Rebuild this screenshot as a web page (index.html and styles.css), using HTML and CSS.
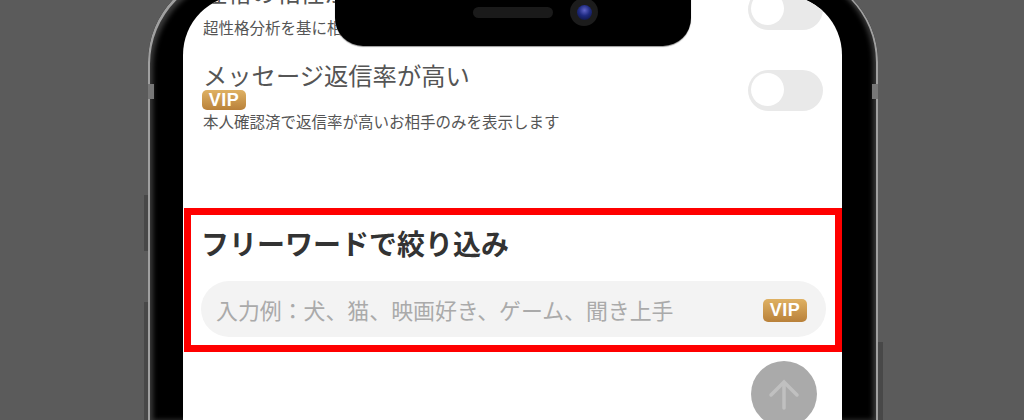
FILE: index.html
```html
<!DOCTYPE html>
<html lang="ja">
<head>
<meta charset="utf-8">
<title>フリーワードで絞り込み</title>
<link rel="stylesheet" href="styles.css">
</head>
<body>
<div class="side-btn btn-l1"></div>
<div class="side-btn btn-l2"></div>
<div class="side-btn btn-r1"></div>
<div class="phone">
  <div class="band band-l"></div>
  <div class="band band-r"></div>
  <div class="screen">
    <section class="row row-first">
      <div class="row-text">
        <div class="row-title">性格の相性が高い</div>
        <div class="row-sub">超性格分析を基に相性が高いお相手のみを表示します</div>
      </div>
      <div class="toggle toggle-first"><span class="knob"></span></div>
    </section>
    <section class="row row-second">
      <div class="row-text">
        <div class="row-title">メッセージ返信率が高い</div>
        <span class="vip vip-small">VIP</span>
        <div class="row-sub">本人確認済で返信率が高いお相手のみを表示します</div>
      </div>
      <div class="toggle"><span class="knob"></span></div>
    </section>
    <section class="freeword">
      <h2 class="freeword-title">フリーワードで絞り込み</h2>
      <div class="search">
        <span class="placeholder">入力例：犬、猫、映画好き、ゲーム、聞き上手</span>
        <span class="vip vip-large">VIP</span>
      </div>
    </section>
    <button class="to-top" type="button" aria-label="上へ">
      <svg width="34" height="34" viewBox="0 0 34 34" fill="none" stroke="#c0c0c0" stroke-width="3.5" stroke-linecap="round">
        <path d="M17 31V5M4 18L17 5L30 18"/>
      </svg>
    </button>
  </div>
  <div class="notch">
    <span class="speaker"></span>
    <span class="camera"><span class="lens"></span></span>
  </div>
</div>
</body>
</html>
```
FILE: styles.css
```css
* { box-sizing: border-box; }
html, body { margin: 0; height: 100%; }
body {
  position: relative;
  width: 1024px;
  height: 420px;
  overflow: hidden;
  background: #5b5b5b;
  font-family: "Noto Sans CJK JP", "Noto Sans", sans-serif;
}
.side-btn { position: absolute; background: #484848; }
.btn-l1 { left: 144px; top: 195px; width: 5px; height: 56px; }
.btn-l2 { left: 144px; top: 302px; width: 5px; height: 118px; }
.btn-r1 { left: 878px; top: 342px; width: 5px; height: 78px; }
.phone {
  position: absolute;
  left: 148px;
  top: -28px;
  width: 730px;
  height: 448px;
  background: #000;
  border-radius: 90px 90px 0 0;
  box-shadow: inset 2px 2px 0 0 #a0a0a0, inset -2px 0 0 0 #a0a0a0, inset 5px 5px 5px 0 #3a3a3a, inset -5px 0 5px 0 #3a3a3a;
}
.band { position: absolute; top: 112px; width: 6px; height: 15px; background: #777; }
.band-l { left: 0; }
.band-r { right: 0; }
.screen {
  position: absolute;
  left: 35px;
  top: 23px;
  width: 659px;
  height: 425px;
  background: #fff;
  border-radius: 60px 60px 0 0;
  overflow: hidden;
}
.row {
  display: flex;
  justify-content: space-between;
  align-items: flex-start;
  padding: 0 19px 0 20px;
}
.row-first { height: 60px; margin-top: -16px; }
.row-second { margin-top: 19px; height: 78px; }
.row-title { font-size: 24.3px; line-height: 30px; margin-top: 2px; color: #555; white-space: nowrap; }
.row-first .row-title { line-height: 26px; margin-top: 0; }
.row-sub { font-size: 15.5px; line-height: 20px; color: #555; white-space: nowrap; margin-top: 1px; }
.row-first .row-sub { line-height: 18px; margin-top: 13px; }
.toggle {
  flex: none;
  width: 75px;
  height: 41px;
  margin-top: 12px;
  padding: 3px;
  border-radius: 21px;
  background: #e9e9e9;
}
.row-first .toggle-first { margin-top: 10px; }
.knob { display: block; width: 33px; height: 33px; border-radius: 50%; background: #fff; }
.vip {
  display: inline-flex;
  align-items: center;
  justify-content: center;
  font-family: "Liberation Sans", sans-serif;
  font-weight: 700;
  color: #fff;
  letter-spacing: 0.5px;
  background: linear-gradient(180deg, #dfb163 0%, #b9813a 100%);
  border-radius: 5px;
}
.vip-small { display: flex; width: 44px; height: 20px; font-size: 18px; line-height: 20px; margin: 0 0 0 -1px; }
.freeword {
  margin-top: 72px;
  margin-left: 1px;
  height: 144px;
  width: 658px;
  border: 7px solid #f00;
  padding: 0 9px 0 10px;
}
.freeword-title {
  margin: 0;
  padding-top: 8px;
  font-size: 28px;
  line-height: 40px;
  font-weight: 700;
  color: #333;
  white-space: nowrap;
}
.search {
  display: flex;
  align-items: center;
  justify-content: space-between;
  height: 56px;
  margin-top: 18px;
  padding: 0 19px 0 15px;
  border-radius: 28px;
  background: #f3f3f3;
}
.placeholder { font-size: 21.9px; color: #aaa; white-space: nowrap; }
.vip-large { width: 44px; height: 23px; font-size: 18px; margin-top: 3px; }
.to-top {
  position: absolute;
  left: 568px;
  top: 366px;
  width: 66px;
  height: 66px;
  padding: 0;
  border: 0;
  border-radius: 50%;
  background: #aaa;
  display: flex;
  align-items: center;
  justify-content: center;
}
.notch {
  position: absolute;
  left: 187px;
  top: 0;
  width: 356px;
  height: 74px;
  background: #000;
  border-radius: 0 0 28px 28px;
  box-shadow: 0 1px 1px #999;
}
.speaker {
  position: absolute;
  left: 138px;
  top: 35px;
  width: 80px;
  height: 11px;
  border-radius: 6px;
  background: #1a1a1a;
}
.camera {
  position: absolute;
  left: 235px;
  top: 26px;
  width: 28px;
  height: 28px;
  border-radius: 50%;
  background: #1c1c1c;
  display: flex;
  align-items: center;
  justify-content: center;
}
.lens {
  width: 15px;
  height: 15px;
  border-radius: 50%;
  background: radial-gradient(circle at 50% 35%, #5f63c8 0%, #1e2a80 45%, #0a0f30 100%);
}
```
